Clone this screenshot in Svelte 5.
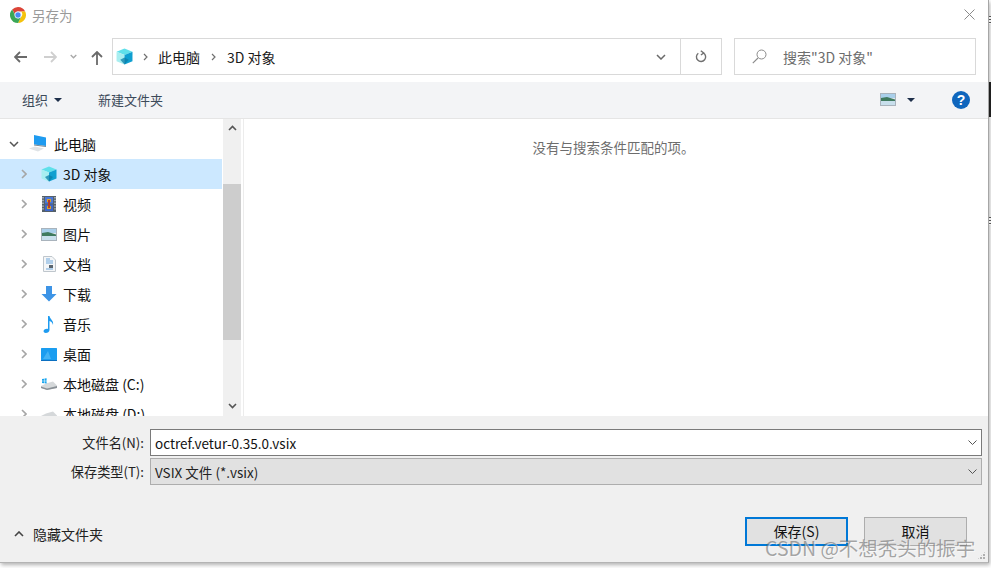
<script>
  const folders = [
    { id: 'cube', label: '3D 对象', selected: true },
    { id: 'film', label: '视频' },
    { id: 'pic', label: '图片' },
    { id: 'doc', label: '文档' },
    { id: 'down', label: '下载' },
    { id: 'note', label: '音乐' },
    { id: 'desk', label: '桌面' },
    { id: 'drive', label: '本地磁盘 (C:)' },
    { id: 'drive2', label: '本地磁盘 (D:)' }
  ];
</script>

{#snippet cube(s)}
  <svg width={s} height={s} viewBox="0 0 16 16">
    <path d="M8 0.5 15.5 3.5 8 6.5 0.5 3.5Z" fill="#5fe0ea"/>
    <path d="M0.5 3.5 8 6.5V15.5L0.5 12.5Z" fill="#a8eef0"/>
    <path d="M15.5 3.5 8 6.5V15.5L15.5 12.5Z" fill="#0f9fd0"/>
    <path d="M4 11 8 9 12 11 8 15.5Z" fill="#0a7ea8" opacity=".75"/>
  </svg>
{/snippet}

{#snippet picture()}
  <svg width="16" height="13" viewBox="0 0 16 13">
    <rect x=".5" y=".5" width="15" height="12" fill="#dfe6ec" stroke="#a9b3bc"/>
    <rect x="1" y="1" width="14" height="4" fill="#a9cfea"/>
    <path d="M1 5 7 4 15 6.5V8.5H1Z" fill="#3f7a5e"/>
    <rect x="1" y="8" width="14" height="4" fill="#c8dfec"/>
  </svg>
{/snippet}

{#snippet icon(id)}
  {#if id === 'cube'}
    {@render cube(16)}
  {:else if id === 'film'}
    <svg width="14" height="16" viewBox="0 0 14 16">
      <rect width="14" height="16" fill="#55606a"/>
      <path d="M1 1v14M13 1v14" stroke="#d5dade" stroke-width="1.2" stroke-dasharray="1.4 1.4"/>
      <rect x="3" y="1" width="8" height="6.5" fill="#4a78d8"/>
      <rect x="3" y="8.5" width="8" height="6.5" fill="#3f68c8"/>
      <path d="M5 3h4v3H5ZM5 10h4v3H5Z" fill="#d9a02c"/>
      <path d="M6 4h2v8H6Z" fill="#b33a2a"/>
    </svg>
  {:else if id === 'pic'}
    {@render picture()}
  {:else if id === 'doc'}
    <svg width="13" height="16" viewBox="0 0 13 16">
      <path d="M.5.5H9L12.5 4V15.5H.5Z" fill="#f4f6f8" stroke="#bfc6cc"/>
      <path d="M3 3h4M3 5h7M3 7h7M3 13h7" stroke="#6ea8dc"/>
      <rect x="6" y="9" width="4" height="3" fill="#5a6670"/>
    </svg>
  {:else if id === 'down'}
    <svg width="16" height="16" viewBox="0 0 16 16">
      <path d="M5 0H11V8H15.5L8 15.5 .5 8H5Z" fill="#3d94e6"/>
    </svg>
  {:else if id === 'note'}
    <svg width="12" height="17" viewBox="0 0 12 17">
      <path d="M5 0H6.5C6.8 3 11 4.5 10 9 9.6 6.5 8 5.5 6.5 5V14C6.5 16 4.5 17 2.8 17 1.2 17 .3 16 .6 14.8 1 13.2 3.5 12.3 5 13Z" fill="#1e9bf0"/>
    </svg>
  {:else if id === 'desk'}
    <svg width="16" height="13" viewBox="0 0 16 13">
      <rect width="16" height="12" rx=".5" fill="#1a9df0"/>
      <path d="M2 11 7 3 10 11Z" fill="#56bcf6" opacity=".7"/>
      <rect y="12" width="16" height="1" fill="#0b6fc0"/>
    </svg>
  {:else if id === 'drive'}
    <svg width="16" height="12" viewBox="0 0 16 12">
      <path d="M5 5.5 12 3.5 16 7.5V10L6 12 0 10V8Z" fill="#d5d8da"/>
      <path d="M0 8.5 6 10.5 16 8V10L6 12 0 10Z" fill="#8a9096"/>
      <path d="M1 1 3 .7V2.8H1ZM3.5.6 5.6.2V2.8H3.5ZM1 3.2H3V5.3L1 5ZM3.5 3.2H5.6V5.6L3.5 5.3Z" fill="#19a5ee"/>
    </svg>
  {:else if id === 'drive2'}
    <svg width="16" height="12" viewBox="0 0 16 12">
      <path d="M5 5.5 12 3.5 16 7.5V10L6 12 0 10V8Z" fill="#d5d8da"/>
      <path d="M0 8.5 6 10.5 16 8V10L6 12 0 10Z" fill="#8a9096"/>
    </svg>
  {/if}
{/snippet}

<div class="page">
  <div class="window">
    <header class="title">
      <svg class="chrome" width="16" height="16" viewBox="0 0 16 16">
        <path d="M8 0A8 8 0 0 1 15.2 4.5H8A3.5 3.5 0 0 0 4.7 6.9L2.2 2.5A8 8 0 0 1 8 0Z" fill="#dc4437"/>
        <path d="M15.2 4.5A8 8 0 0 1 8 16L11 10A3.5 3.5 0 0 0 11 4.5Z" fill="#f4c20d"/>
        <path d="M2.2 2.5 6 9.7A3.5 3.5 0 0 0 11 10L8 16A8 8 0 0 1 2.2 2.5Z" fill="#3aa757"/>
        <circle cx="8" cy="8" r="3.2" fill="#4a8af4" stroke="#fff" stroke-width=".8"/>
      </svg>
      <span class="title-text">另存为</span>
      <svg class="close" width="11" height="11" viewBox="0 0 11 11">
        <path d="M.5.5 10.5 10.5M10.5.5.5 10.5" stroke="#8a8a8a" stroke-width="1" fill="none"/>
      </svg>
    </header>

    <nav class="nav">
      <svg class="nav-back" width="13" height="12" viewBox="0 0 13 12"><path d="M6 1 1 6 6 11M1 6H13" stroke="#6a6a6a" stroke-width="1.8" fill="none"/></svg>
      <svg class="nav-fwd" width="13" height="12" viewBox="0 0 13 12"><path d="M7 1 12 6 7 11M12 6H0" stroke="#cfcfcf" stroke-width="1.8" fill="none"/></svg>
      <svg class="nav-drop" width="7" height="5" viewBox="0 0 7 5"><path d="M.7 1 3.5 3.8 6.3 1" stroke="#a8a8a8" stroke-width="1.3" fill="none"/></svg>
      <svg class="nav-up" width="12" height="14" viewBox="0 0 12 14"><path d="M1 6 6 1 11 6M6 1V14" stroke="#6a6a6a" stroke-width="1.8" fill="none"/></svg>
      <div class="address">
        <span class="addr-icon">{@render cube(17)}</span>
        <svg class="crumb-sep first" width="5" height="8" viewBox="0 0 5 8"><path d="M1 1 4 4 1 7" stroke="#707070" stroke-width="1.2" fill="none"/></svg>
        <span class="crumb">此电脑</span>
        <svg class="crumb-sep" width="5" height="8" viewBox="0 0 5 8"><path d="M1 1 4 4 1 7" stroke="#707070" stroke-width="1.2" fill="none"/></svg>
        <span class="crumb">3D 对象</span>
        <span class="grow"></span>
        <span class="addr-btn dropdown">
          <svg width="10" height="6" viewBox="0 0 10 6"><path d="M1 1 5 5 9 1" stroke="#6a6a6a" stroke-width="1.5" fill="none"/></svg>
        </span>
        <span class="addr-btn refresh">
          <svg width="12" height="13" viewBox="0 0 12 13"><path d="M3.3 3.2A4.6 4.6 0 1 0 8.5 3M5.8.8 8.7 3 5.9 5" stroke="#707070" stroke-width="1.4" fill="none"/></svg>
        </span>
      </div>
      <div class="search">
        <svg width="15" height="15" viewBox="0 0 15 15"><circle cx="9.5" cy="5.5" r="4.5" stroke="#8a8a8a" fill="none"/><path d="M6 9 .8 14.2" stroke="#8a8a8a" stroke-width="1.1"/></svg>
        <span>搜索"3D 对象"</span>
      </div>
    </nav>

    <div class="toolbar">
      <span class="tool organize">组织</span>
      <span class="tri"></span>
      <span class="tool newfolder">新建文件夹</span>
      <span class="grow"></span>
      <span class="view-icon">{@render picture()}</span>
      <span class="tri view-tri"></span>
      <span class="help">?</span>
    </div>

    <main class="main">
      <aside class="tree">
        <div class="row root">
          <svg class="chev-down" width="10" height="6" viewBox="0 0 10 6"><path d="M1 1 5 5 9 1" stroke="#555" stroke-width="1.5" fill="none"/></svg>
          <svg class="pc" width="18" height="17" viewBox="0 0 18 17">
            <path d="M5 0 17 2.5V11L5 9.5Z" fill="#1e9bf0"/>
            <path d="M5 9.5 17 11V12L5 10.5Z" fill="#7d8a94"/>
            <path d="M0 13.5 6 11.5 15 13.5 9 16.5Z" fill="#dfe3e6"/>
          </svg>
          <span>此电脑</span>
        </div>
        {#each folders as f}
          <div class="row child" class:selected={f.selected}>
            <svg class="chev" width="6" height="10" viewBox="0 0 6 10"><path d="M1 1 5 5 1 9" stroke="#a6a6a6" stroke-width="1.6" fill="none"/></svg>
            <span class="ic">{@render icon(f.id)}</span>
            <span>{f.label}</span>
          </div>
        {/each}
      </aside>
      <div class="scrollbar">
        <span class="sb-btn">
          <svg width="9" height="6" viewBox="0 0 9 6"><path d="M1 5 4.5 1.5 8 5" stroke="#555" stroke-width="1.6" fill="none"/></svg>
        </span>
        <span class="sb-track"><span class="sb-thumb"></span></span>
        <span class="sb-btn">
          <svg width="9" height="6" viewBox="0 0 9 6"><path d="M1 1 4.5 4.5 8 1" stroke="#555" stroke-width="1.6" fill="none"/></svg>
        </span>
      </div>
      <section class="content">
        <p>没有与搜索条件匹配的项。</p>
      </section>
    </main>

    <footer class="footer">
      <div class="form">
        <label for="fname">文件名(N):</label>
        <div class="combo input">
          <span id="fname">octref.vetur-0.35.0.vsix</span>
          <svg width="9" height="5" viewBox="0 0 9 5"><path d="M.5.5 4.5 4.5 8.5.5" stroke="#555" fill="none"/></svg>
        </div>
        <label for="ftype">保存类型(T):</label>
        <div class="combo select">
          <span id="ftype">VSIX 文件 (*.vsix)</span>
          <svg width="9" height="5" viewBox="0 0 9 5"><path d="M.5.5 4.5 4.5 8.5.5" stroke="#555" fill="none"/></svg>
        </div>
      </div>
      <div class="actions">
        <svg class="hide-chev" width="10" height="6" viewBox="0 0 10 6"><path d="M1 5 5 1 9 5" stroke="#444" stroke-width="1.6" fill="none"/></svg>
        <span class="hide">隐藏文件夹</span>
        <span class="grow"></span>
        <button class="btn primary">保存(S)</button>
        <button class="btn">取消</button>
      </div>
    </footer>
    <span class="grip"></span>
    <span class="watermark">CSDN @不想秃头的振宇</span>
  </div>
  <span class="edge-dark"></span>
  <span class="edge-mark top"></span>
  <span class="edge-mark mid"></span>
</div>

<style>
  :global(body) {
    margin: 0;
    background: #fff;
  }
  .page {
    position: relative;
    width: 991px;
    height: 568px;
    overflow: hidden;
    font-family: "Noto Sans CJK SC", "Noto Sans", sans-serif;
    font-size: 13px;
    color: #1a1a1a;
  }
  .window {
    position: relative;
    width: 989px;
    height: 563px;
    box-sizing: border-box;
    display: flex;
    flex-direction: column;
    background: #fff;
    border-right: 1px solid #a6a6a6;
    border-bottom: 1px solid #b4b4b4;
    box-shadow: 1px 2px 4px rgba(0, 0, 0, .3);
  }
  .edge-dark {
    position: absolute;
    left: 989px;
    top: 82px;
    width: 2px;
    height: 35px;
    background: #1f1f1f;
  }
  .edge-mark {
    position: absolute;
    left: 989px;
    width: 2px;
    height: 8px;
    background: repeating-linear-gradient(#555 0 1px, #eee 1px 3px);
  }
  .edge-mark.top { top: 16px; }
  .edge-mark.mid { top: 217px; }
  .grow { flex: 1; }

  .title {
    height: 32px;
    flex: none;
    display: flex;
    align-items: center;
    padding: 0 13px 0 10px;
  }
  .chrome { margin-top: -2px; }
  .title-text {
    margin-left: 6px;
    font-size: 13.5px;
    color: #9a9a9a;
    margin-top: -3px;
  }
  .close { margin-left: auto; margin-top: -3px; }

  .nav {
    height: 50px;
    flex: none;
    box-sizing: border-box;
    padding-bottom: 1px;
    display: flex;
    align-items: center;
    padding-left: 14px;
  }
  .nav svg { flex: none; }
  .nav-fwd { margin-left: 17px; }
  .nav-drop { margin-left: 13px; }
  .nav-up { margin-left: 14px; margin-top: 2px; }
  .address {
    margin-left: 9px;
    width: 610px;
    height: 37px;
    box-sizing: border-box;
    border: 1px solid #d9d9d9;
    display: flex;
    align-items: center;
    padding-left: 3px;
  }
  .addr-icon { display: flex; }
  .nav .crumb-sep { margin: 0 11px; }
  .nav .crumb-sep.first { margin: 0 10px; }
  .crumb { font-size: 14px; color: #1a1a1a; }
  .addr-btn {
    display: flex;
    align-items: center;
    justify-content: center;
    height: 100%;
  }
  .dropdown { width: 38px; }
  .refresh { width: 40px; border-left: 1px solid #d9d9d9; }
  .search {
    margin-left: 12px;
    width: 242px;
    height: 37px;
    box-sizing: border-box;
    border: 1px solid #d9d9d9;
    display: flex;
    align-items: center;
    padding-left: 17px;
    gap: 16px;
    color: #6d6d6d;
    font-size: 14px;
  }

  .toolbar {
    height: 37px;
    flex: none;
    box-sizing: border-box;
    background: #f3f4f6;
    border-bottom: 1px solid #e5e5e5;
    padding-bottom: 1px;
    display: flex;
    align-items: center;
    padding-left: 22px;
    color: #3c4a5a;
  }
  .tool { font-size: 13px; }
  .tri {
    width: 0;
    height: 0;
    margin-left: 6px;
    border-left: 4px solid transparent;
    border-right: 4px solid transparent;
    border-top: 4px solid #1e2f4a;
  }
  .newfolder { margin-left: 36px; }
  .view-icon { display: flex; }
  .view-tri { margin-left: 11px; }
  .help {
    margin-left: 37px;
    margin-right: 18px;
    width: 18px;
    height: 18px;
    border-radius: 50%;
    background: #0f66bd;
    color: #fff;
    font: bold 14px/18px "Liberation Sans", sans-serif;
    text-align: center;
  }

  .main {
    flex: 1;
    min-height: 0;
    display: flex;
  }
  .tree {
    width: 222px;
    flex: none;
    overflow: hidden;
    padding-top: 11px;
    box-sizing: border-box;
  }
  .row {
    height: 30px;
    display: flex;
    align-items: center;
    white-space: nowrap;
    font-size: 14px;
    color: #111;
  }
  .row.root {
    height: 29px;
    box-sizing: border-box;
    padding: 0 0 2px 9px;
  }
  .pc { margin-left: 10px; margin-right: 7px; }
  .row.child { padding-left: 21px; }
  .row.selected { background: #cce8ff; }
  .ic {
    width: 16px;
    height: 17px;
    margin-left: 14px;
    margin-right: 6px;
    display: flex;
    align-items: center;
    justify-content: center;
    flex: none;
  }
  .scrollbar {
    width: 18px;
    margin-left: 1px;
    flex: none;
    background: #f0f0f0;
    display: flex;
    flex-direction: column;
  }
  .sb-btn {
    height: 17px;
    flex: none;
    display: flex;
    align-items: center;
    justify-content: center;
  }
  .sb-btn:last-child { height: 19px; padding-bottom: 2px; box-sizing: border-box; }
  .sb-track { flex: 1; padding-top: 48px; }
  .sb-thumb { display: block; height: 156px; background: #cdcdcd; }
  .content {
    flex: 1;
    margin-left: 2px;
    border-left: 1px solid #ececec;
    text-align: center;
  }
  .content p {
    margin: 17px 0 0;
    color: #6d6d6d;
    font-size: 13.5px;
    line-height: 22px;
    padding-right: 5px;
  }

  .footer {
    height: 146px;
    flex: none;
    box-sizing: border-box;
    background: #f0f0f0;
    padding: 13px 6px 0 0;
    display: flex;
    flex-direction: column;
  }
  .form {
    display: grid;
    grid-template-columns: 144px 1fr;
    column-gap: 6px;
    row-gap: 2px;
    align-items: center;
  }
  .form label {
    text-align: right;
    font-size: 13.2px;
    color: #222;
  }
  .combo {
    height: 27px;
    box-sizing: border-box;
    display: flex;
    align-items: center;
    justify-content: space-between;
    padding: 0 4px;
    font-size: 13.5px;
    color: #111;
  }
  .input { background: #fff; border: 1px solid #7a7a7a; }
  .select { background: #e1e1e1; border: 1px solid #adadad; color: #222; }
  .actions {
    display: flex;
    align-items: center;
    margin-top: 32px;
    height: 29px;
    padding-left: 14px;
    padding-right: 15px;
  }
  .hide-chev { margin-top: 4px; }
  .hide { margin-left: 9px; margin-top: 4px; font-size: 14px; color: #222; }
  .btn {
    width: 103px;
    height: 29px;
    padding: 0 0 2px;
    background: #e1e1e1;
    border: 1px solid #adadad;
    font: 14px "Noto Sans CJK SC", sans-serif;
    color: #111;
  }
  .primary { border: 2px solid #0078d7; margin-right: 16px; }
  .grip {
    position: absolute;
    right: 2px;
    bottom: 2px;
    width: 9px;
    height: 9px;
    background-image: radial-gradient(circle at 1px 1px, #b0b0b0 1px, transparent 1.2px);
    background-size: 3px 3px;
    clip-path: polygon(100% 0, 100% 100%, 0 100%);
  }
  .watermark {
    position: absolute;
    left: 765px;
    top: 535px;
    font-size: 19.5px;
    line-height: 26px;
    white-space: nowrap;
    color: rgba(110, 110, 110, .6);
    text-shadow: 1px 1px 0 rgba(255, 255, 255, .55);
    font-family: "Noto Sans CJK SC", sans-serif;
  }
</style>
